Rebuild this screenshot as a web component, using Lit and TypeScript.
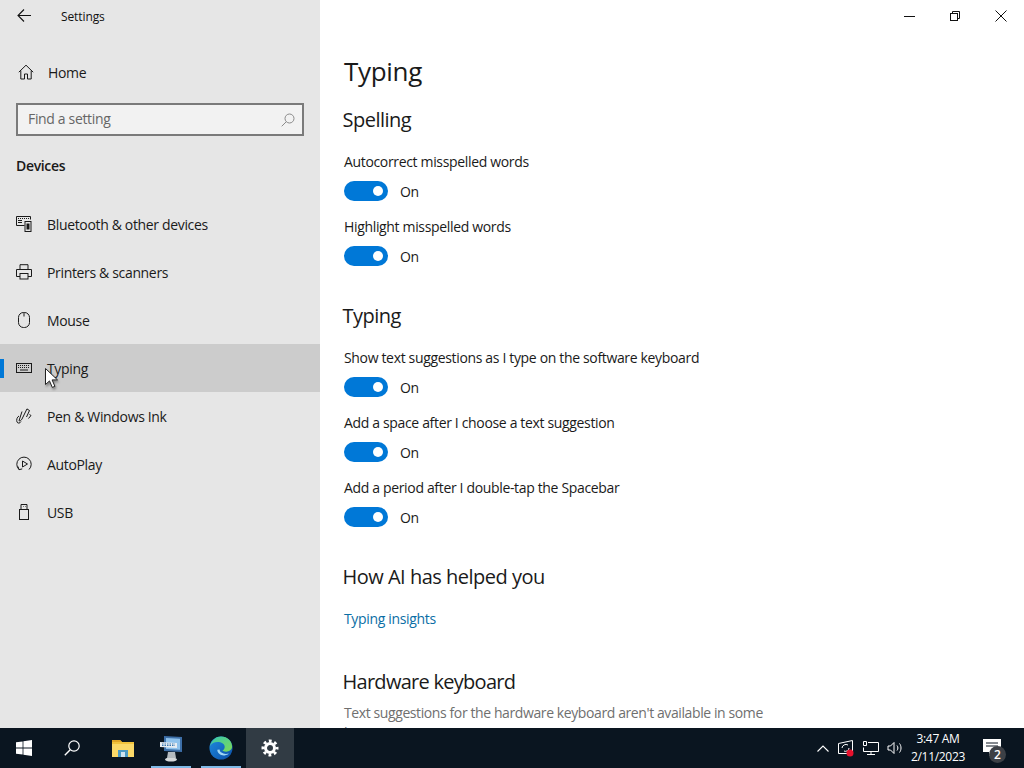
import { LitElement, html, css, svg } from "lit";
import { customElement } from "lit/decorators.js";

const ic = (w: number, h: number, body: unknown, cls = "") =>
  html`<svg class=${cls} width=${w} height=${h} viewBox="0 0 ${w} ${h}" fill="none" stroke="currentColor" stroke-width="1">${body}</svg>`;

const icons: Record<string, unknown> = {
  home: ic(16, 16, svg`<path d="M.8 8.2 8 1.2l7.2 7M2.8 6.6v8.4h3.7v-5h3v5h3.7V6.6"/>`),
  bt: ic(16, 16, svg`<path d="M.5.5h14v3M.5.5v9h8"/><path d="M2 2.5h1M4 2.5h1M6 2.5h1M8 2.5h1M10 2.5h1M12 2.5h1M2 4.5h4M2 6.5h4" stroke-width="1.2"/><rect x="9" y="5.500" width="6" height="10"/><rect x="11" y="8" width="2" height="5" fill="currentColor"/>`),
  printer: ic(16, 16, svg`<path d="M4 5V.7h8V5M4 12.500H.5V5.500h15v7H12"/><rect x="4" y="9.500" width="8" height="5.500"/>`),
  mouse: ic(16, 16, svg`<rect x="2.500" y=".5" width="11" height="15" rx="5"/><path d="M8 .5v4"/>`),
  keyboard: ic(16, 16, svg`<rect x=".5" y="3.500" width="15" height="9"/><path d="M2 5.500h12M2 7.500h12" stroke-dasharray="1 1" stroke-width="1.200"/><path d="M4 10h8"/>`),
  pen: ic(16, 16, svg`<path d="M11 .8 6 11c-.6 1.300-2 2.200-3 1.800L6 3.500M11 1l2.500 1.500-3 6.500M13.500 6.500l1.500 1-2.500 3M3 8C1 9 .2 12 1 14c.6 1.500 3 1.600 4-.5"/>`),
  play: ic(16, 16, svg`<path d="M3 13.500A7.200 7.200 0 1 1 13 13.500"/><path d="M2 10.500l1 3.200 3.200-.8M6.500 5v6l5-3z"/>`),
  usb: ic(16, 16, svg`<rect x="3.500" y="5.500" width="9" height="10"/><path d="M5 5.500V.5h6v5M7 2.500h.5M9 2.500h.5"/>`),
};

const nav = [
  ["bt", "Bluetooth & other devices"],
  ["printer", "Printers & scanners"],
  ["mouse", "Mouse"],
  ["keyboard", "Typing"],
  ["pen", "Pen & Windows Ink"],
  ["play", "AutoPlay"],
  ["usb", "USB"],
];

const sections = [
  { title: "Spelling", items: ["Autocorrect misspelled words", "Highlight misspelled words"] },
  {
    title: "Typing",
    items: [
      "Show text suggestions as I type on the software keyboard",
      "Add a space after I choose a text suggestion",
      "Add a period after I double-tap the Spacebar",
    ],
  },
];

@customElement("app-root")
export class AppRoot extends LitElement {
  static styles = css`
    :host {
      display: block;
      width: 1024px;
      height: 768px;
      overflow: hidden;
      position: relative;
      font-family: "Open Sans", "Noto Sans", sans-serif;
      font-size: 14px;
      color: #1a1a1a;
      letter-spacing: -0.34px;
    }
    .main { display: flex; height: 728px; background: #fff; }
    .side { width: 320px; flex: none; background: #e6e6e6; }
    .titlebar { display: flex; align-items: center; height: 32px; color: #111; }
    .back { margin-left: 17px; width: 44px; display: flex; }
    .apptitle { font-size: 12px; letter-spacing: -0.1px; }
    .home { display: flex; align-items: center; height: 48px; margin-top: 16px; padding-left: 18px; gap: 14px; }
    .search {
      display: flex; align-items: center; justify-content: space-between;
      box-sizing: border-box; width: 288px; height: 33px; margin: 7px 0 0 16px; padding: 0 7px 0 10px;
      border: 2px solid #7a7a7a; background: #f2f2f2; color: #666;
    }
    .search span { margin-top: -2px; }
    .search svg { color: #8a8a8a; }
    .group { margin: 20px 0 0 16px; height: 20px; line-height: 20px; font-weight: 600; }
    .list { margin-top: 24px; }
    .item { display: flex; align-items: center; height: 48px; padding-left: 16px; gap: 15px; position: relative; }
    .item.sel { background: #ccc; }
    .item.sel::before { content: ""; position: absolute; left: 0; top: 15px; width: 4px; height: 19px; background: #0078d7; }
    .item svg { flex: none; }
    .content { flex: 1; min-width: 0; overflow: hidden; padding-left: 24px; }
    .winbar { display: flex; justify-content: flex-end; height: 32px; color: #111; }
    .winbtn { width: 46px; display: flex; align-items: center; justify-content: center; }
    h1 { margin: 19px 0 0; font-size: 26px; font-weight: 400; line-height: 40px; letter-spacing: -0.3px; }
    h2 { margin: 36px 0 0 -1.500px; font-size: 20px; font-weight: 400; line-height: 28px; letter-spacing: -0.5px; }
    h2.first { margin-top: 15px; }
    .label { margin-top: 16px; line-height: 20px; }
    h2 + .label { margin-top: 18px; }
    .tog { display: flex; align-items: center; height: 20px; margin-top: 9px; gap: 12px; }
    .track { position: relative; width: 44px; height: 20px; border-radius: 10px; background: #0078d7; }
    .knob { position: absolute; right: 5px; top: 5px; width: 10px; height: 10px; border-radius: 50%; background: #fff; }
    .link { margin-top: 18px; line-height: 20px; color: #0a6ea5; }
    h2.hw { margin-top: 39px; letter-spacing: -0.72px; }
    .note { margin-top: 7px; width: 430px; line-height: 20px; color: #6f6f6f; letter-spacing: -0.4px; }
    .task { display: flex; align-items: stretch; gap: 1px; height: 40px; background: #0a1520; color: #fff; position: relative; }
    .tb { width: 48px; display: flex; align-items: center; justify-content: center; position: relative; flex: none; }
    .tb.on::after { content: ""; position: absolute; left: 4px; right: 4px; bottom: 0; height: 2px; background: #7fb9e6; }
    .tb.cur { background: #313b44; }
    .tb.search-btn svg { margin-right: 2px; }
    .tb.folder svg { margin-left: 1px; }
    .tb.edge { margin-left: 1px; }
    .spacer { flex: 1; }
    .tray { display: flex; align-items: center; gap: 8px; }
    .clock { width: 60px; text-align: center; font-size: 12px; line-height: 18px; letter-spacing: -0.3px; margin-left: -3px; white-space: nowrap; }
    .notif { position: relative; width: 48px; display: flex; align-items: center; justify-content: center; margin-right: 7px; }
    .notif svg { margin-right: 3px; margin-bottom: 3px; }
    .badge {
      position: absolute; left: 20px; top: 18px; width: 17px; height: 17px; border-radius: 50%;
      background: #3c4046; font-size: 12px; font-weight: 600; line-height: 17px; text-align: center; letter-spacing: 0;
    }
    .cursor { position: absolute; left: 45px; top: 368px; filter: drop-shadow(1px 2px 1px rgba(0,0,0,.35)); }
  `;

  private toggle() {
    return html`<div class="tog"><div class="track"><div class="knob"></div></div><span>On</span></div>`;
  }

  render() {
    return html`
      <div class="main">
        <aside class="side">
          <div class="titlebar">
            <div class="back">${ic(15, 14, svg`<path d="M14 6.500H1M7 .5l-6 6 6 6" stroke-width="1.100"/>`)}</div>
            <span class="apptitle">Settings</span>
          </div>
          <div class="home">${icons.home}<span>Home</span></div>
          <div class="search">
            <span>Find a setting</span>
            ${ic(14, 14, svg`<circle cx="8.500" cy="5.500" r="4.500"/><path d="M5.300 8.700.7 13.300"/>`)}
          </div>
          <div class="group">Devices</div>
          <div class="list">
            ${nav.map(
              ([i, t]) => html`<div class="item ${t === "Typing" ? "sel" : ""}">${icons[i]}<span>${t}</span></div>`
            )}
          </div>
        </aside>
        <section class="content">
          <div class="winbar">
            <div class="winbtn">${ic(11, 11, svg`<path d="M0 5.500h11"/>`)}</div>
            <div class="winbtn">${ic(10, 10, svg`<rect x=".5" y="2.500" width="7" height="7"/><path d="M2.500 2.500v-2h7v7h-2"/>`)}</div>
            <div class="winbtn">${ic(12, 12, svg`<path d="M.5.5l11 11M11.500.5l-11 11"/>`)}</div>
          </div>
          <h1>Typing</h1>
          ${sections.map(
            (s, n) => html`<h2 class=${n === 0 ? "first" : ""}>${s.title}</h2>
              ${s.items.map((l) => html`<div class="label">${l}</div>${this.toggle()}`)}`
          )}
          <h2>How AI has helped you</h2>
          <div class="link">Typing insights</div>
          <h2 class="hw">Hardware keyboard</h2>
          <div class="note">Text suggestions for the hardware keyboard aren't available in some languages</div>
        </section>
      </div>
      <footer class="task">
        <div class="tb">
          <svg width="16" height="16" viewBox="0 0 16 16" fill="#fff"><path d="M0 2.300 6.600 1.400v6.200H0zM7.400 1.300 16 0v7.600H7.400zM0 8.400h6.600v6.200L0 13.700zM7.400 8.400H16V16l-8.600-1.300z"/></svg>
        </div>
        <div class="tb search-btn">${ic(16, 16, svg`<circle cx="10" cy="6" r="5.200" stroke-width="1.200"/><path d="M6.200 9.800.8 15.200" stroke-width="1.400"/>`)}</div>
        <div class="tb folder">
          <svg width="22" height="18" viewBox="0 0 22 18"><path d="M0 1h8l2 2h12v15H0z" fill="#f2c33c"/><path d="M0 1h8l2 2H0z" fill="#e0a526"/><path d="M0 5h22v13H0z" fill="#fbd968"/><path d="M6 11h10v7H6z" fill="#4b9ac4"/><path d="M9 13h4v5H9z" fill="#cfe3ee"/></svg>
        </div>
        <div class="tb on">
          <svg width="24" height="27" viewBox="0 0 24 27"><ellipse cx="12" cy="24.500" rx="6" ry="2" fill="#d5d8da"/><path d="M9 17h7l1 6H8z" fill="#b4babf"/><path d="M5 1l18 1v15L5 16z" fill="#3d6fa8"/><path d="M7 3l14 .7v11L7 14z" fill="#8fc2ec"/><path d="M1 7l17 1v5L1 12z" fill="#e8edf2"/><path d="M3 9h13M3 10.500h13" stroke="#3a78b0" stroke-dasharray="1.500 1"/></svg>
        </div>
        <div class="tb on edge">
          <svg width="24" height="24" viewBox="0 0 26 26">
            <defs>
              <linearGradient id="e1" x1="0" y1="0" x2="1" y2="1"><stop offset="0" stop-color="#36c8b0"/><stop offset="1" stop-color="#7ed957"/></linearGradient>
              <linearGradient id="e2" x1="0" y1="0" x2="1" y2="1"><stop offset="0" stop-color="#1f8de0"/><stop offset="1" stop-color="#0c4fa8"/></linearGradient>
            </defs>
            <circle cx="13" cy="13" r="12.500" fill="url(#e2)"/>
            <path d="M1 11C3 4 8 .5 13 .5c7 0 12 5 12 11 0 3.500-3 5.500-6.500 5.500-2 0-3.500-.8-4-1.500 3-1 3.500-5.500.5-7.500C10 5 3 6.500 1 11z" fill="url(#e1)"/>
            <path d="M9 15c0 4 4 6.500 8 6 2-.3 3.500-1 4.500-2-3 1-6 .5-8-1-1.500-1-2-2.500-2-3.500z" fill="#9fd6f5"/>
          </svg>
        </div>
        <div class="tb cur">
          <svg width="18" height="18" viewBox="0 0 18 18" fill="none" stroke="#fff"><circle cx="9" cy="9" r="4.500" stroke-width="3"/><circle cx="9" cy="9" r="7" stroke-width="3" stroke-dasharray="2.800 2.700" stroke-dashoffset="1.400"/></svg>
        </div>
        <div class="spacer"></div>
        <div class="tray">
          ${ic(12, 7, svg`<path d="M.5 6.500l5.500-5.500 5.500 5.500" stroke-width="1.100"/>`)}
          <svg width="18" height="18" viewBox="0 0 18 18" fill="none" stroke="#fff"><path d="M1.500 4.500l14-3v13h-14zM5 9a4 4 0 0 1 6-3M12 9a3.500 3.500 0 0 1-5 3"/><circle cx="13" cy="14" r="3.500" fill="#e8112d" stroke="none"/></svg>
          ${ic(16, 16, svg`<path d="M.5 1.500h3v4h-3zM5 2.500h10.500v9h-15v-4M8 11.500v3M4 14.500h8"/>`)}
          ${ic(16, 14, svg`<path d="M1 5h2.500L7 1.500v11L3.500 9H1zM10 4.500c1.200 1.500 1.200 3.500 0 5M12.500 2.500c2 2.500 2 6.500 0 9"/>`)}
          <div class="clock">3:47 AM<br />2/11/2023</div>
        </div>
        <div class="notif">
          <svg width="20" height="20" viewBox="0 0 20 20" fill="#fff"><path d="M1 2h18v13h-7l-5 4v-4H1z"/><path d="M4 6h12M4 9h12" stroke="#0a1520"/></svg>
          <span class="badge">2</span>
        </div>
      </footer>
      <svg class="cursor" width="14" height="21" viewBox="0 0 14 21"><path d="M.5.5v16l4-3.600 2.800 6.500 2.600-1.100-2.800-6.400h5.400z" fill="#fff" stroke="#222"/></svg>
    `;
  }
}
